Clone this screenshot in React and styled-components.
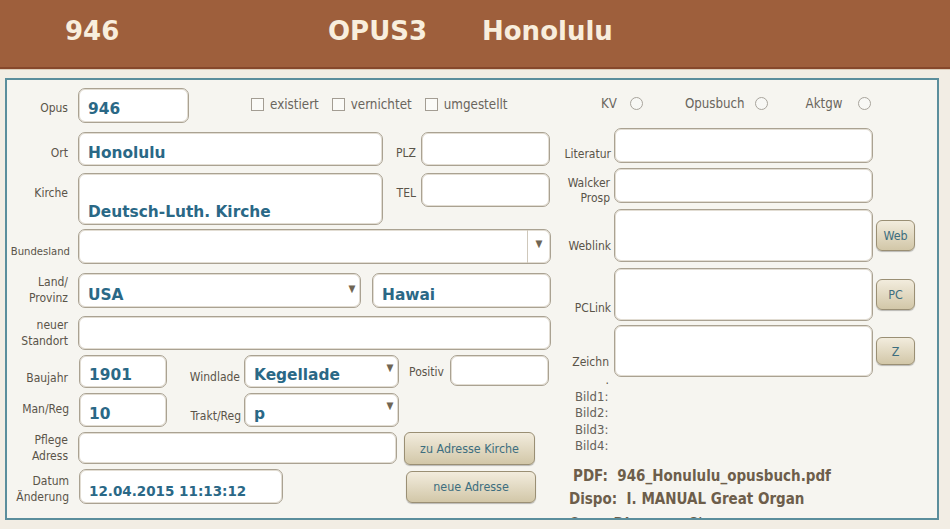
import styled, { createGlobalStyle } from 'styled-components';

const GlobalStyle = createGlobalStyle`
  body {
    margin: 0;
    background: #f2ede4;
    font-family: "DejaVu Sans Condensed", "DejaVu Sans", sans-serif;
  }
`;

const Header = styled.header`
  display: flex;
  align-items: center;
  height: 69px;
  box-sizing: border-box;
  padding: 0 0 5px 65px;
  background: #9e5f3c;
  border-bottom: 2px solid #86482b;
  box-shadow: 0 1px 0 #dccdb9;
  color: #f8eedd;
  font: bold 26px "DejaVu Sans", sans-serif;
`;

const HeaderCell = styled.span`
  width: ${(p) => (p.$w ? `${p.$w}px` : 'auto')};
  flex: none;
`;

const Panel = styled.main`
  display: flex;
  height: 442px;
  margin: 9px 11px 0 5px;
  box-sizing: border-box;
  border: 2px solid #5b8e9c;
  background: #f6f5f0;
  overflow: hidden;
`;

const LeftCol = styled.section`
  display: flex;
  flex-direction: column;
  width: 549px;
  flex: none;
  padding-top: 8px;
`;

const RightCol = styled.section`
  display: flex;
  flex-direction: column;
  padding: 8px 0 0 4px;

  & > * {
    flex-shrink: 0;
  }
`;

const Row = styled.div`
  display: flex;
  align-items: center;
  flex: none;
  height: ${(p) => p.$h}px;
  margin-top: ${(p) => p.$mt || 0}px;
`;

const Label = styled.span`
  flex: none;
  width: ${(p) => p.$w || 71}px;
  box-sizing: border-box;
  padding-right: ${(p) => (p.$pr === undefined ? 10 : p.$pr)}px;
  padding-top: ${(p) => (p.$top ? p.$top : Math.max(0, 2 * (p.$dy || 0)))}px;
  padding-bottom: ${(p) => Math.max(0, -2 * (p.$dy || 0))}px;
  align-self: ${(p) => (p.$top ? 'flex-start' : 'center')};
  text-align: right;
  font-size: ${(p) => p.$fs || 12}px;
  line-height: ${(p) => p.$lh || 16}px;
  font-stretch: condensed;
  color: #5a5449;
  white-space: nowrap;
`;

const Field = styled.div`
  display: flex;
  align-items: stretch;
  flex: none;
  width: ${(p) => p.$w}px;
  height: ${(p) => (p.$h ? `${p.$h}px` : '100%')};
  align-self: ${(p) => (p.$h ? 'flex-start' : 'stretch')};
  margin-left: ${(p) => p.$ml || 0}px;
  box-sizing: border-box;
  background: #fff;
  border: 1px solid #aaa292;
  border-radius: 7px;
  box-shadow: inset 0 0 0 1px #e2ddd3;
`;

const Value = styled.span`
  flex: 1;
  display: flex;
  align-items: flex-end;
  padding: 0 9px ${(p) => (p.$pb === undefined ? 3 : p.$pb)}px;
  color: #2a6886;
  font: bold ${(p) => p.$fs || 15.4}px/18px "DejaVu Sans", sans-serif;
  white-space: nowrap;
`;

const Arrow = styled.span`
  flex: none;
  width: ${(p) => (p.$divided ? 22 : 16)}px;
  padding-top: ${(p) => p.$pt || 7}px;
  border-left: ${(p) => (p.$divided ? '1px solid #cfc8bb' : 'none')};
  text-align: center;
  font-size: 10px;
  line-height: 10px;
  color: #6f6554;
`;

const Checks = styled.div`
  display: flex;
  align-self: flex-start;
  gap: 13px;
  margin: 9px 0 0 62px;
`;

const Check = styled.label`
  display: flex;
  align-items: center;
  gap: 6px;
  font-size: 13.3px;
  font-stretch: condensed;
  color: #6a655d;
`;

const Box = styled.span`
  width: 11px;
  height: 11px;
  border: 1px solid #a39d93;
  background: #fbfbf8;
`;

const RadioRow = styled.div`
  display: flex;
  align-items: center;
  height: 30px;
  padding-left: 41px;
  font-size: 13.2px;
  font-stretch: condensed;
  color: #6a655d;
`;

const RadioText = styled.span`
  margin-left: ${(p) => p.$ml || 0}px;
`;

const Radio = styled.span`
  width: 11px;
  height: 11px;
  margin-left: ${(p) => p.$ml}px;
  border: 1px solid #a8a49c;
  border-radius: 50%;
  background: #f8f8f5;
`;

const Button = styled.button`
  flex: none;
  width: ${(p) => p.$w}px;
  height: ${(p) => p.$h}px;
  margin-left: ${(p) => p.$ml || 0}px;
  padding: 0;
  border: 1px solid #9a8f74;
  border-radius: 6px;
  background: linear-gradient(#f2ecdd, #d2c7a8);
  box-shadow: 0 1px 1px rgba(0, 0, 0, 0.25);
  color: #3d6e7f;
  font-family: "DejaVu Sans Condensed", "DejaVu Sans", sans-serif;
  font-stretch: condensed;
  font-size: 12.4px;
`;

const Pictures = styled.div`
  display: flex;
  flex-direction: column;
  margin-top: 12px;
  padding-left: 15px;
  font-size: 13px;
  line-height: 16.3px;
  font-stretch: condensed;
  color: #66625a;
`;

const Info = styled.div`
  margin-top: ${(p) => p.$mt || 0}px;
  padding-left: ${(p) => p.$pl}px;
  font: bold ${(p) => p.$fs || 15}px/23px "DejaVu Sans", sans-serif;
  font-stretch: condensed;
  color: #6d5e4b;
  white-space: pre;
`;

export default function App() {
  return (
    <>
      <GlobalStyle />
      <Header>
        <HeaderCell $w={263}>946</HeaderCell>
        <HeaderCell $w={154}>OPUS3</HeaderCell>
        <HeaderCell>Honolulu</HeaderCell>
      </Header>
      <Panel>
        <LeftCol>
          <Row $h={35}>
            <Label $dy={2}>Opus</Label>
            <Field $w={111}>
              <Value $pb={4}>946</Value>
            </Field>
            <Checks>
              <Check>
                <Box />
                existiert
              </Check>
              <Check>
                <Box />
                vernichtet
              </Check>
              <Check>
                <Box />
                umgestellt
              </Check>
            </Checks>
          </Row>
          <Row $h={34} $mt={9}>
            <Label $dy={4}>Ort</Label>
            <Field $w={305}>
              <Value>Honolulu</Value>
            </Field>
            <Label $w={38} $pr={5} $dy={4}>
              PLZ
            </Label>
            <Field $w={129} />
          </Row>
          <Row $h={52} $mt={7}>
            <Label $top={12}>Kirche</Label>
            <Field $w={305}>
              <Value>Deutsch-Luth. Kirche</Value>
            </Field>
            <Label $w={38} $pr={5} $top={12}>
              TEL
            </Label>
            <Field $w={129} $h={34} />
          </Row>
          <Row $h={35} $mt={4}>
            <Label $dy={5} $fs={11.2} $pr={8}>
              Bundesland
            </Label>
            <Field $w={473}>
              <Value />
              <Arrow $divided $pt={9}>
                ▼
              </Arrow>
            </Field>
          </Row>
          <Row $h={35} $mt={9}>
            <Label $dy={-1}>
              Land/
              <br />
              Provinz
            </Label>
            <Field $w={283}>
              <Value>USA</Value>
              <Arrow $pt={10}>▼</Arrow>
            </Field>
            <Field $w={179} $ml={11}>
              <Value>Hawai</Value>
            </Field>
          </Row>
          <Row $h={34} $mt={8}>
            <Label>
              neuer
              <br />
              Standort
            </Label>
            <Field $w={473} />
          </Row>
          <Row $h={33} $mt={5}>
            <Label $w={72} $pr={11} $dy={6}>
              Baujahr
            </Label>
            <Field $w={88}>
              <Value>1901</Value>
            </Field>
            <Label $w={77} $pr={4} $dy={5}>
              Windlade
            </Label>
            <Field $w={155}>
              <Value>Kegellade</Value>
              <Arrow>▼</Arrow>
            </Field>
            <Label $w={51} $pr={6}>
              Positiv
            </Label>
            <Field $w={99} $h={31} />
          </Row>
          <Row $h={34} $mt={5}>
            <Label $w={72} $pr={10} $dy={-1}>
              Man/Reg
            </Label>
            <Field $w={88}>
              <Value>10</Value>
            </Field>
            <Label $w={77} $pr={3} $dy={6}>
              Trakt/Reg
            </Label>
            <Field $w={155}>
              <Value>p</Value>
              <Arrow>▼</Arrow>
            </Field>
          </Row>
          <Row $h={32} $mt={5}>
            <Label>
              Pflege
              <br />
              Adress
            </Label>
            <Field $w={319} />
            <Button $w={131} $h={33} $ml={7}>
              zu Adresse Kirche
            </Button>
          </Row>
          <Row $h={35} $mt={5}>
            <Label $w={72} $pr={10} $dy={2}>
              Datum
              <br />
              Änderung
            </Label>
            <Field $w={204}>
              <Value $fs={13.5}>12.04.2015 11:13:12</Value>
            </Field>
            <Button $w={130} $h={32} $ml={123}>
              neue Adresse
            </Button>
          </Row>
        </LeftCol>

        <RightCol>
          <RadioRow>
            <RadioText>KV</RadioText>
            <Radio $ml={13} />
            <RadioText $ml={42}>Opusbuch</RadioText>
            <Radio $ml={10} />
            <RadioText $ml={38}>Aktgw</RadioText>
            <Radio $ml={16} />
          </RadioRow>
          <Row $h={35} $mt={10}>
            <Label $w={54} $pr={3} $dy={8}>
              Literatur
            </Label>
            <Field $w={259} />
          </Row>
          <Row $h={35} $mt={5}>
            <Label $w={54} $pr={4} $dy={5} $lh={15}>
              Walcker
              <br />
              Prosp
            </Label>
            <Field $w={259} />
          </Row>
          <Row $h={53} $mt={6}>
            <Label $w={54} $pr={3} $dy={10}>
              Weblink
            </Label>
            <Field $w={259} />
            <Button $w={39} $h={31} $ml={3}>
              Web
            </Button>
          </Row>
          <Row $h={53} $mt={6}>
            <Label $w={54} $pr={3} $dy={13}>
              PCLink
            </Label>
            <Field $w={259} />
            <Button $w={39} $h={31} $ml={3}>
              PC
            </Button>
          </Row>
          <Row $h={52} $mt={4}>
            <Label $w={54} $pr={5} $dy={20} $lh={18}>
              Zeichn
              <br />.
            </Label>
            <Field $w={259} />
            <Button $w={39} $h={28} $ml={3}>
              Z
            </Button>
          </Row>
          <Pictures>
            <span>Bild1:</span>
            <span>Bild2:</span>
            <span>Bild3:</span>
            <span>Bild4:</span>
          </Pictures>
          <Info $mt={11} $pl={13}>
            PDF:  946_Honululu_opusbuch.pdf
          </Info>
          <Info $pl={9}>Dispo:  I. MANUAL Great Organ</Info>
          <Info $pl={9} $mt={2}>
            Open Diapason 8'
          </Info>
        </RightCol>
      </Panel>
    </>
  );
}
